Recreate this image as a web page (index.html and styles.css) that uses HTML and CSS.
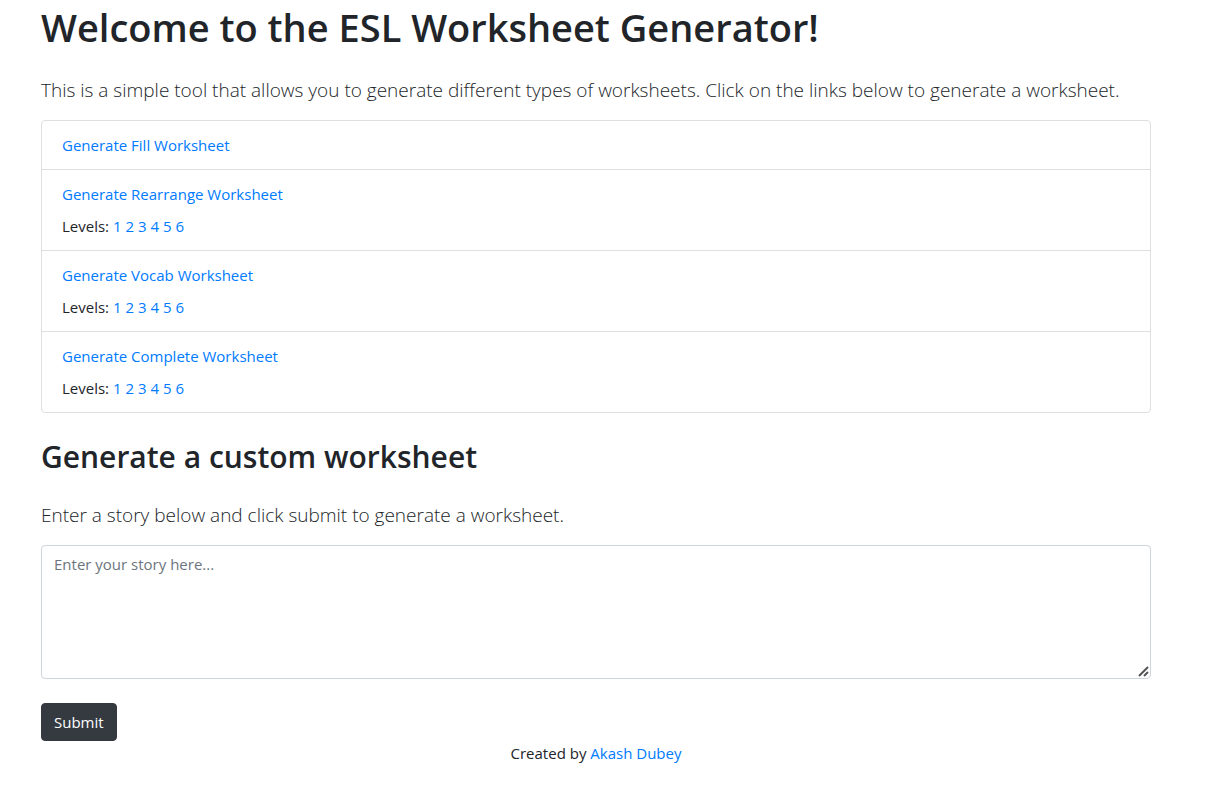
FILE: index.html
```html
<!DOCTYPE html>
<html lang="en">
<head>
<meta charset="utf-8">
<meta name="viewport" content="width=device-width, initial-scale=1">
<title>ESL Worksheet Generator</title>
<link rel="stylesheet" href="styles.css">
</head>
<body>
<main class="container">
  <h1 class="title">Welcome to the ESL Worksheet Generator!</h1>
  <p class="lead">This is a simple tool that allows you to generate different types of worksheets. Click on the links below to generate a worksheet.</p>
  <ul class="list">
    <li class="item"><a href="#fill">Generate Fill Worksheet</a></li>
    <li class="item">
      <a href="#rearrange">Generate Rearrange Worksheet</a>
      <div class="levels">Levels: <a href="#r1">1</a> <a href="#r2">2</a> <a href="#r3">3</a> <a href="#r4">4</a> <a href="#r5">5</a> <a href="#r6">6</a></div>
    </li>
    <li class="item">
      <a href="#vocab">Generate Vocab Worksheet</a>
      <div class="levels">Levels: <a href="#v1">1</a> <a href="#v2">2</a> <a href="#v3">3</a> <a href="#v4">4</a> <a href="#v5">5</a> <a href="#v6">6</a></div>
    </li>
    <li class="item">
      <a href="#complete">Generate Complete Worksheet</a>
      <div class="levels">Levels: <a href="#c1">1</a> <a href="#c2">2</a> <a href="#c3">3</a> <a href="#c4">4</a> <a href="#c5">5</a> <a href="#c6">6</a></div>
    </li>
  </ul>
  <h2 class="subtitle">Generate a custom worksheet</h2>
  <form class="form">
    <label class="lead" for="story">Enter a story below and click submit to generate a worksheet.</label>
    <textarea class="story" id="story" name="story" rows="5" placeholder="Enter your story here..."></textarea>
    <button class="submit" type="submit">Submit</button>
  </form>
</main>
<footer class="footer">Created by <a href="#author">Akash Dubey</a></footer>
</body>
</html>
```

FILE: styles.css
```css
*, *::before, *::after { box-sizing: border-box; }

body {
  margin: 0;
  padding: 3px 65px 0 41px;
  background: #fff;
  color: #212529;
  font: 400 15px/24px "Open Sans", "Noto Sans", sans-serif;
}

a { color: #007bff; text-decoration: none; }
a:hover { color: #0056b3; text-decoration: underline; }

.title { margin: 0 0 24px; font-size: 38px; line-height: 48px; font-weight: 600; }

.lead { display: block; margin: 0 0 15px; font-size: 19px; line-height: 30px; font-weight: 300; }

.list {
  margin: 0 0 24px;
  padding: 0;
  list-style: none;
  border: 1px solid #dfdfdf;
  border-radius: 4px;
}
.item { padding: 12px 20px; }
.item + .item { border-top: 1px solid #dfdfdf; }
.levels { margin-top: 8px; }

.subtitle { margin: 0 0 23px; font-size: 30px; line-height: 40px; font-weight: 600; }

.form { display: flex; flex-direction: column; align-items: flex-start; }
.story {
  width: 100%;
  height: 134px;
  margin: 0 0 24px;
  padding: 6px 12px;
  border: 1px solid #ced4da;
  border-radius: 4px;
  color: #495057;
  font: inherit;
  resize: vertical;
}
.story::placeholder { color: #6c757d; opacity: 1; }
.story::-webkit-resizer {
  background: url("data:image/svg+xml,%3Csvg xmlns='http://www.w3.org/2000/svg' width='15' height='15'%3E%3Cpath d='M4 13L13 4M9 13L13 9' stroke='%23555' stroke-width='2'/%3E%3C/svg%3E") right bottom no-repeat;
}
.submit {
  padding: 6px 12px;
  border: 1px solid #343a40;
  border-radius: 4px;
  background: #343a40;
  color: #fff;
  font: inherit;
}
.footer { text-align: center; }
```
